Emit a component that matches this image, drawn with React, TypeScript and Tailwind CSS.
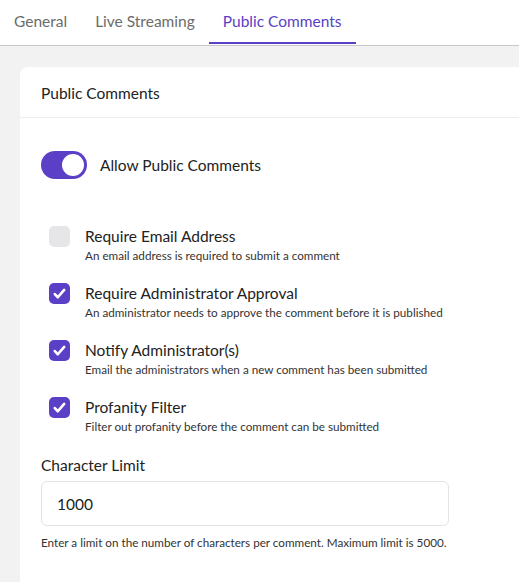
import { useState } from "react";

const purple = "bg-[#5b3fc6]";

function Check({ checked }: { checked: boolean }) {
  return (
    <div
      className={`w-[21px] h-[21px] rounded-[5px] flex items-center justify-center shrink-0 ${
        checked ? purple : "bg-[#e6e6e8]"
      }`}
    >
      {checked && (
        <svg width="15" height="15" viewBox="0 0 16 16" fill="none">
          <path d="M3 8.6l3.2 3.4L13 4.2" stroke="white" strokeWidth={2.8} strokeLinecap="round" strokeLinejoin="round" />
        </svg>
      )}
    </div>
  );
}

const options = [
  { title: "Require Email Address", desc: "An email address is required to submit a comment", checked: false },
  { title: "Require Administrator Approval", desc: "An administrator needs to approve the comment before it is published", checked: true },
  { title: "Notify Administrator(s)", desc: "Email the administrators when a new comment has been submitted", checked: true },
  { title: "Profanity Filter", desc: "Filter out profanity before the comment can be submitted", checked: true },
];

export default function App() {
  const [limit, setLimit] = useState("1000");

  return (
    <div className="min-h-screen bg-[#f2f2f2] font-['Lato',sans-serif] overflow-hidden">
      <div className="h-[46px] bg-white border-b border-[#c8c8c8] flex">
        <div className="px-[14px] h-[44px] flex items-center text-[15.5px] text-[#6b6b6b]">General</div>
        <div className="px-[14px] h-[44px] flex items-center text-[15.5px] text-[#6b6b6b]">Live Streaming</div>
        <div className="px-[14px] h-[44px] flex items-center text-[15.5px] text-[#5b3fc6] border-b-2 border-[#5b3fc6] pt-[2px]">
          Public Comments
        </div>
      </div>

      <div className="pt-[21px] pl-5">
        <div className="w-[520px] bg-white rounded-tl-lg min-h-[540px]">
          <div className="h-[51px] border-b border-[#eeeeee] pl-[21px] pt-[3px] flex items-center text-[15.5px] text-[#222]">
            Public Comments
          </div>

          <div className="pl-[21px] pt-[33px]">
            <div className="flex items-center gap-[13px] h-[28px]">
              <div className={`w-[46px] h-[28px] rounded-full ${purple} flex items-center justify-end pr-[3px]`}>
                <div className="w-[22px] h-[22px] rounded-full bg-white" />
              </div>
              <span className="text-[15.5px] text-[#222] pt-[2px]">Allow Public Comments</span>
            </div>

            <div className="mt-[47px] flex flex-col gap-5 pl-[8px]">
              {options.map((o) => (
                <div key={o.title} className="flex gap-[15px]">
                  <Check checked={o.checked} />
                  <div>
                    <div className="text-[15.5px] leading-5 text-[#222]">{o.title}</div>
                    <div className="text-[11.7px] leading-4 text-[#333] mt-px">{o.desc}</div>
                  </div>
                </div>
              ))}
            </div>

            <div className="mt-[21px] text-[15.5px] leading-5 text-[#222]">Character Limit</div>
            <input
              value={limit}
              onChange={(e) => setLimit(e.target.value)}
              className="mt-[6px] w-[408px] h-[45px] rounded-md border border-[#e3e3e3] px-[15px] text-[15.5px] text-[#222] outline-none"
            />
            <div className="mt-2 text-[11.7px] leading-4 text-[#333]">
              Enter a limit on the number of characters per comment. Maximum limit is 5000.
            </div>
          </div>
        </div>
      </div>
    </div>
  );
}
